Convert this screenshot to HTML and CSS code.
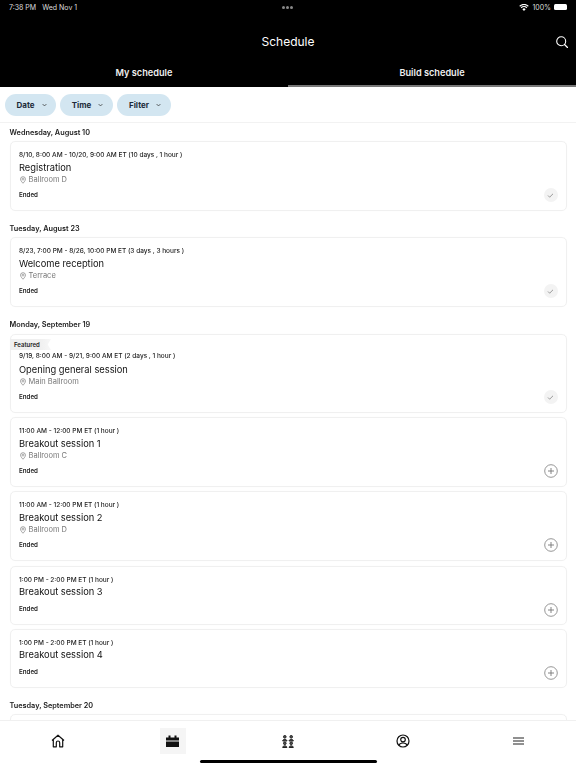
FILE: index.html
```html
<!DOCTYPE html>
<html lang="en">
<head>
<meta charset="utf-8">
<title>Schedule</title>
<link rel="stylesheet" href="styles.css">
</head>
<body>
<div class="app">
  <header class="header">
    <div class="status">
      <span class="status-left"><span>7:38 PM</span><span>Wed Nov 1</span></span>
      <span class="status-dots"><i></i><i></i><i></i></span>
      <span class="status-right">
        <svg class="wifi" viewBox="0 0 12 9" width="10" height="7"><path d="M6 9 3.900 6.600a3 3 0 0 1 4.200 0zM2.900 5.500 1.800 4.300a6 6 0 0 1 8.400 0L9.100 5.500a4.400 4.400 0 0 0-6.200 0zM.9 3.400 0 2.300a8.500 8.500 0 0 1 12 0l-.9 1.100a7.200 7.200 0 0 0-10.200 0z" fill="#fff"/></svg>
        <span>100%</span>
        <span class="battery"></span>
      </span>
    </div>
    <div class="titlebar">
      <h1 class="title">Schedule</h1>
      <svg class="search" viewBox="0 0 12 12" width="12" height="12"><circle cx="5.200" cy="5.200" r="4.500" fill="none" stroke="#fff" stroke-width="1.100"/><path d="m8.500 8.500 3 3" stroke="#fff" stroke-width="1.200" stroke-linecap="round"/></svg>
    </div>
    <nav class="tabs">
      <div class="tab">My schedule</div>
      <div class="tab tab-active">Build schedule</div>
    </nav>
  </header>

  <div class="filters">
    <button class="pill pill-date">Date <svg class="chev" viewBox="0 0 8 5" width="5" height="4"><path d="m1 1 3 3 3-3" fill="none" stroke="#333" stroke-width="1.200"/></svg></button>
    <button class="pill pill-time">Time <svg class="chev" viewBox="0 0 8 5" width="5" height="4"><path d="m1 1 3 3 3-3" fill="none" stroke="#333" stroke-width="1.200"/></svg></button>
    <button class="pill pill-filter">Filter <svg class="chev" viewBox="0 0 8 5" width="5" height="4"><path d="m1 1 3 3 3-3" fill="none" stroke="#333" stroke-width="1.200"/></svg></button>
  </div>

  <main class="list">
    <section class="group">
      <h2 class="day">Wednesday, August 10</h2>
      <article class="card">
        <div class="time">8/10, 8:00 AM - 10/20, 9:00 AM ET (10 days , 1 hour )</div>
        <div class="name">Registration</div>
        <div class="loc"><svg class="pin" viewBox="0 0 8 10" width="6" height="8"><path d="M4 .6a3.300 3.300 0 0 1 3.300 3.300C7.300 6 4 9.300 4 9.300S.7 6 .7 3.900A3.300 3.300 0 0 1 4 .6z" fill="none" stroke="#777" stroke-width=".9"/><circle cx="4" cy="3.900" r="1.200" fill="none" stroke="#777" stroke-width=".8"/></svg>Ballroom D</div>
        <div class="ended">Ended</div>
        <span class="check"><svg viewBox="0 0 8 6" width="7" height="5"><path d="m1 3 2 2 4-4" fill="none" stroke="#888" stroke-width="1"/></svg></span>
      </article>
    </section>

    <section class="group">
      <h2 class="day">Tuesday, August 23</h2>
      <article class="card">
        <div class="time">8/23, 7:00 PM - 8/26, 10:00 PM ET (3 days , 3 hours )</div>
        <div class="name">Welcome reception</div>
        <div class="loc"><svg class="pin" viewBox="0 0 8 10" width="6" height="8"><path d="M4 .6a3.300 3.300 0 0 1 3.300 3.300C7.300 6 4 9.300 4 9.300S.7 6 .7 3.900A3.300 3.300 0 0 1 4 .6z" fill="none" stroke="#777" stroke-width=".9"/><circle cx="4" cy="3.900" r="1.200" fill="none" stroke="#777" stroke-width=".8"/></svg>Terrace</div>
        <div class="ended">Ended</div>
        <span class="check"><svg viewBox="0 0 8 6" width="7" height="5"><path d="m1 3 2 2 4-4" fill="none" stroke="#888" stroke-width="1"/></svg></span>
      </article>
    </section>

    <section class="group">
      <h2 class="day">Monday, September 19</h2>
      <article class="card card-featured">
        <span class="featured">Featured</span>
        <div class="time">9/19, 8:00 AM - 9/21, 9:00 AM ET (2 days , 1 hour )</div>
        <div class="name">Opening general session</div>
        <div class="loc"><svg class="pin" viewBox="0 0 8 10" width="6" height="8"><path d="M4 .6a3.300 3.300 0 0 1 3.300 3.300C7.300 6 4 9.300 4 9.300S.7 6 .7 3.900A3.300 3.300 0 0 1 4 .6z" fill="none" stroke="#777" stroke-width=".9"/><circle cx="4" cy="3.900" r="1.200" fill="none" stroke="#777" stroke-width=".8"/></svg>Main Ballroom</div>
        <div class="ended">Ended</div>
        <span class="check"><svg viewBox="0 0 8 6" width="7" height="5"><path d="m1 3 2 2 4-4" fill="none" stroke="#888" stroke-width="1"/></svg></span>
      </article>
      <article class="card card-tight">
        <div class="time">11:00 AM - 12:00 PM ET (1 hour )</div>
        <div class="name">Breakout session 1</div>
        <div class="loc"><svg class="pin" viewBox="0 0 8 10" width="6" height="8"><path d="M4 .6a3.300 3.300 0 0 1 3.300 3.300C7.300 6 4 9.300 4 9.300S.7 6 .7 3.900A3.300 3.300 0 0 1 4 .6z" fill="none" stroke="#777" stroke-width=".9"/><circle cx="4" cy="3.900" r="1.200" fill="none" stroke="#777" stroke-width=".8"/></svg>Ballroom C</div>
        <div class="ended">Ended</div>
        <span class="add"><svg viewBox="0 0 14 14" width="14" height="14"><circle cx="7" cy="7" r="6.300" fill="none" stroke="#8a8a8a" stroke-width=".9"/><path d="M7 4v6M4 7h6" stroke="#777" stroke-width=".9"/></svg></span>
      </article>
      <article class="card card-tight">
        <div class="time">11:00 AM - 12:00 PM ET (1 hour )</div>
        <div class="name">Breakout session 2</div>
        <div class="loc"><svg class="pin" viewBox="0 0 8 10" width="6" height="8"><path d="M4 .6a3.300 3.300 0 0 1 3.300 3.300C7.300 6 4 9.300 4 9.300S.7 6 .7 3.900A3.300 3.300 0 0 1 4 .6z" fill="none" stroke="#777" stroke-width=".9"/><circle cx="4" cy="3.900" r="1.200" fill="none" stroke="#777" stroke-width=".8"/></svg>Ballroom D</div>
        <div class="ended">Ended</div>
        <span class="add"><svg viewBox="0 0 14 14" width="14" height="14"><circle cx="7" cy="7" r="6.300" fill="none" stroke="#8a8a8a" stroke-width=".9"/><path d="M7 4v6M4 7h6" stroke="#777" stroke-width=".9"/></svg></span>
      </article>
      <article class="card card-noloc">
        <div class="time">1:00 PM - 2:00 PM ET (1 hour )</div>
        <div class="name">Breakout session 3</div>
        <div class="ended">Ended</div>
        <span class="add"><svg viewBox="0 0 14 14" width="14" height="14"><circle cx="7" cy="7" r="6.300" fill="none" stroke="#8a8a8a" stroke-width=".9"/><path d="M7 4v6M4 7h6" stroke="#777" stroke-width=".9"/></svg></span>
      </article>
      <article class="card card-noloc">
        <div class="time">1:00 PM - 2:00 PM ET (1 hour )</div>
        <div class="name">Breakout session 4</div>
        <div class="ended">Ended</div>
        <span class="add"><svg viewBox="0 0 14 14" width="14" height="14"><circle cx="7" cy="7" r="6.300" fill="none" stroke="#8a8a8a" stroke-width=".9"/><path d="M7 4v6M4 7h6" stroke="#777" stroke-width=".9"/></svg></span>
      </article>
    </section>

    <section class="group">
      <h2 class="day">Tuesday, September 20</h2>
      <article class="card"></article>
    </section>
  </main>

  <footer class="tabbar">
    <div class="bar-items">
      <span class="bar-item"><svg viewBox="0 0 14 14" width="14" height="14"><path d="M1 6.500 7 1.200l6 5.300M2.300 5.500v7.300h3V8.700a1.700 1.700 0 0 1 3.400 0v4.100h3V5.500" fill="none" stroke="#111" stroke-width="1.200" stroke-linejoin="round"/></svg></span>
      <span class="bar-item bar-active"><svg viewBox="0 0 13 12" width="13" height="12"><path d="M0 2.500h2.500V.5h2v2h4v-2h2v2H13v3H0zM0 6.500h13V12H0z" fill="#111"/></svg></span>
      <span class="bar-item"><svg viewBox="0 0 12 13" width="12" height="13" fill="#555" stroke="#222" stroke-width="1"><circle cx="2.800" cy="1.800" r="1.300"/><circle cx="9.200" cy="1.800" r="1.300"/><path d="M.7 6c0-2.200 4.200-2.200 4.200 0zM7.100 6c0-2.200 4.200-2.200 4.200 0z"/><circle cx="2.800" cy="8.300" r="1.300"/><circle cx="9.200" cy="8.300" r="1.300"/><path d="M.7 12.500c0-2.200 4.200-2.200 4.200 0zM7.100 12.500c0-2.200 4.200-2.200 4.200 0z"/></svg></span>
      <span class="bar-item"><svg viewBox="0 0 14 14" width="14" height="14" fill="none" stroke="#111" stroke-width="1.200"><circle cx="7" cy="7" r="6"/><circle cx="7" cy="5.600" r="2.300"/><path d="M3 11.300c.7-3.100 7.300-3.100 8 0"/></svg></span>
      <span class="bar-item"><svg viewBox="0 0 11 8" width="11" height="8"><path d="M0 1h11M0 4h11M0 7h11" stroke="#222" stroke-width="1.100"/></svg></span>
    </div>
    <div class="home-ind"></div>
  </footer>
</div>
</body>
</html>
```
FILE: styles.css
```css
* { box-sizing: border-box; margin: 0; padding: 0; }
html, body { width: 576px; height: 768px; overflow: hidden; background: #fff; }
body { font-family: Inter, "Liberation Sans", sans-serif; color: #111; }
.app { width: 576px; height: 768px; display: flex; flex-direction: column; overflow: hidden; }

.header { background: #000; color: #fff; height: 87px; flex: none; display: flex; flex-direction: column; }
.status { height: 14px; padding: 0 9px; display: flex; justify-content: space-between; align-items: center; font-size: 7px; color: #ddd; position: relative; }
.status-left { display: flex; gap: 6px; }
.status-dots { position: absolute; left: 282px; top: 6px; display: flex; gap: 1px; }
.status-dots i { width: 3px; height: 3px; border-radius: 50%; background: #888; }
.status-right { display: flex; align-items: center; gap: 3px; }
.battery { width: 13px; height: 6px; border-radius: 1.500px; background: #fff; display: block; }
.titlebar { height: 40px; display: flex; align-items: center; justify-content: center; position: relative; padding-top: 16px; }
.title { font-size: 12px; font-weight: 400; color: #fff; transform: translateY(-1px); }
.search { position: absolute; right: 8px; top: 22px; }
.tabs { display: flex; height: 33px; }
.tab { flex: 1; text-align: center; font-size: 9.200px; font-weight: 600; padding-top: 13px; color: #eee; }
.tab-active { border-bottom: 2.500px solid #777; }

.filters { flex: none; height: 36px; display: flex; align-items: center; gap: 4px; padding: 1px 5px 0; border-bottom: 1px solid #f2f2f2; }
.pill { height: 22px; border: 0; border-radius: 11px; background: #d3e6f1; color: #1d2b3a; font: 700 8px Inter, "Liberation Sans", sans-serif; display: flex; align-items: center; justify-content: center; gap: 7px; padding-left: 2px; }
.pill-date { width: 51px; }
.pill-time { width: 53px; }
.pill-filter { width: 54px; }

.list { flex: 1; min-height: 0; overflow: hidden; padding: 0 9.500px 0 10px; opacity: .999; }
.group { display: flex; flex-direction: column; gap: 4px; margin-bottom: 13px; }
.day { font-size: 7.300px; font-weight: 600; color: #222; height: 9px; line-height: 9px; margin: 5px 0 0 -0.500px; }
.group + .group .day { margin-top: 0; }
.card { position: relative; flex: none; border: 1px solid #f0f0f0; border-radius: 5px; padding: 9px 8px 0; background: #fff; box-shadow: 0 0 2px rgba(0,0,0,.03); height: 70px; }
.card-featured { height: 79px; padding-top: 17px; margin-top: 1px; }
.card-noloc { height: 59px; padding-top: 8.500px; margin-top: 1px; }
.card-noloc + .card-noloc { margin-top: 0; }
.time { font-size: 6.500px; font-weight: 500; line-height: 9px; color: #222; }
.name { font-size: 9.300px; line-height: 13px; margin-top: .5px; color: #111; }
.loc { font-size: 7.500px; line-height: 10px; color: #777; display: flex; align-items: center; gap: 3px; margin-top: 1px; }
.pin { margin-left: .5px; }
.ended { font-size: 6.200px; font-weight: 600; line-height: 9px; margin-top: 5.500px; color: #222; }
.card-tight .ended { margin-top: 5px; }
.card-noloc .ended { margin-top: 5.500px; }
.card-featured .name { margin-top: 1.500px; }
.card-featured .loc { margin-top: 1px; }
.card-featured .ended { margin-top: 5px; }
.check { position: absolute; right: 8px; bottom: 8px; width: 14px; height: 14px; border-radius: 50%; background: #f3f3f3; display: flex; align-items: center; justify-content: center; }
.add { position: absolute; right: 8px; bottom: 8px; width: 14px; height: 14px; display: flex; }
.card-noloc .add { bottom: 7px; }
.featured { position: absolute; left: -1px; top: 4px; width: 41px; height: 11px; padding-left: 4px; font-size: 6px; font-weight: 600; line-height: 11px; color: #222; background: linear-gradient(90deg, #efefef 70%, #f7f7f7); clip-path: polygon(0 0, 100% 0, 92% 50%, 100% 100%, 0 100%); }

.tabbar { flex: none; height: 48px; background: #fff; border-top: 1px solid #f0f0f0; position: relative; }
.bar-items { display: flex; height: 33px; padding: 7px 0 0; align-items: center; justify-content: space-around; }
.bar-item { width: 26px; height: 26px; display: flex; align-items: center; justify-content: center; }
.bar-active { background: #f5f5f5; }
.home-ind { position: absolute; left: 200px; top: 39px; width: 177px; height: 3px; border-radius: 2px; background: #000; }
```
